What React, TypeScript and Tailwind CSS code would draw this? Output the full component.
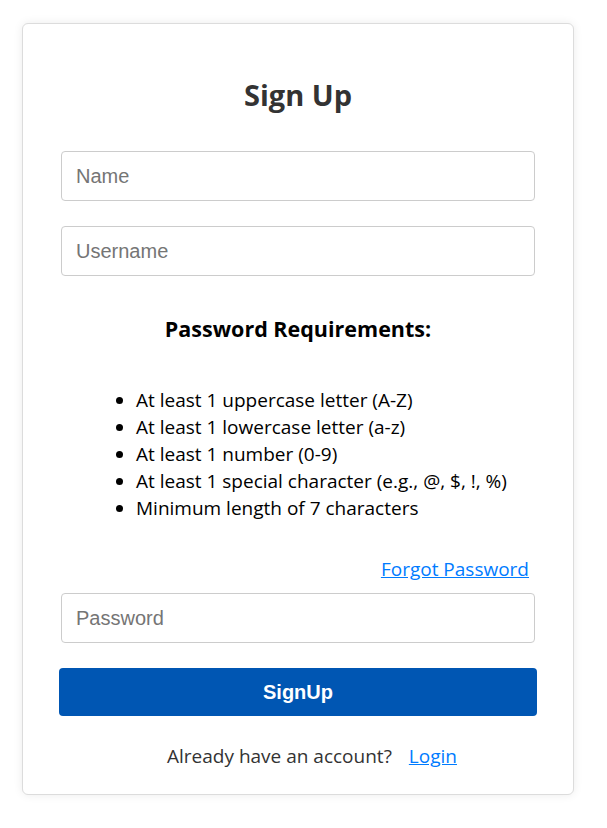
export default function App() {
  const rules = [
    "At least 1 uppercase letter (A-Z)",
    "At least 1 lowercase letter (a-z)",
    "At least 1 number (0-9)",
    "At least 1 special character (e.g., @, $, !, %)",
    "Minimum length of 7 characters",
  ];

  return (
    <div className="min-h-screen bg-white pt-[23px] font-['Open_Sans',sans-serif]">
      <div className="ml-[22px] w-[552px] rounded-md border border-[#dcdcdc] bg-white px-[38px] pb-[25px] pt-[53px] shadow-[0_0_10px_rgba(0,0,0,0.08)]">
        <h2 className="text-center text-[29px] font-bold leading-[36px] text-[#333]">Sign Up</h2>

        <input
          type="text"
          placeholder="Name"
          className="mt-[38px] block h-[50px] w-full rounded border border-[#ccc] px-[14px] font-['Liberation_Sans',sans-serif] text-[20px] text-[#333] placeholder:text-[#757575] outline-none"
        />
        <input
          type="text"
          placeholder="Username"
          className="mt-[25px] block h-[50px] w-full rounded border border-[#ccc] px-[14px] font-['Liberation_Sans',sans-serif] text-[20px] text-[#333] placeholder:text-[#757575] outline-none"
        />

        <h3 className="mt-[39px] text-center text-[21.5px] font-bold leading-[28px] text-black">Password Requirements:</h3>

        <ul className="mt-[44px] list-disc pl-[75px] text-[19px] leading-[27px] text-black">
          {rules.map((r) => (
            <li key={r}>{r}</li>
          ))}
        </ul>

        <div className="mt-[34px] flex justify-end pr-[6px]">
          <a href="#" className="text-[19px] leading-[26px] text-[#007bff] underline">
            Forgot Password
          </a>
        </div>

        <input
          type="password"
          placeholder="Password"
          className="mt-[11px] block h-[50px] w-full rounded border border-[#ccc] px-[14px] font-['Liberation_Sans',sans-serif] text-[20px] text-[#333] placeholder:text-[#757575] outline-none"
        />

        <button className="-mx-[2px] mt-[25px] block h-[48px] w-[calc(100%+4px)] rounded bg-[#0056b3] font-['Liberation_Sans',sans-serif] text-[20px] font-bold text-white">
          SignUp
        </button>

        <p className="mt-[27px] pl-[28px] text-center text-[19px] leading-[26px] text-[#333]">
          Already have an account?
          <a href="#" className="ml-[17px] text-[#007bff] underline">
            Login
          </a>
        </p>
      </div>
    </div>
  );
}
